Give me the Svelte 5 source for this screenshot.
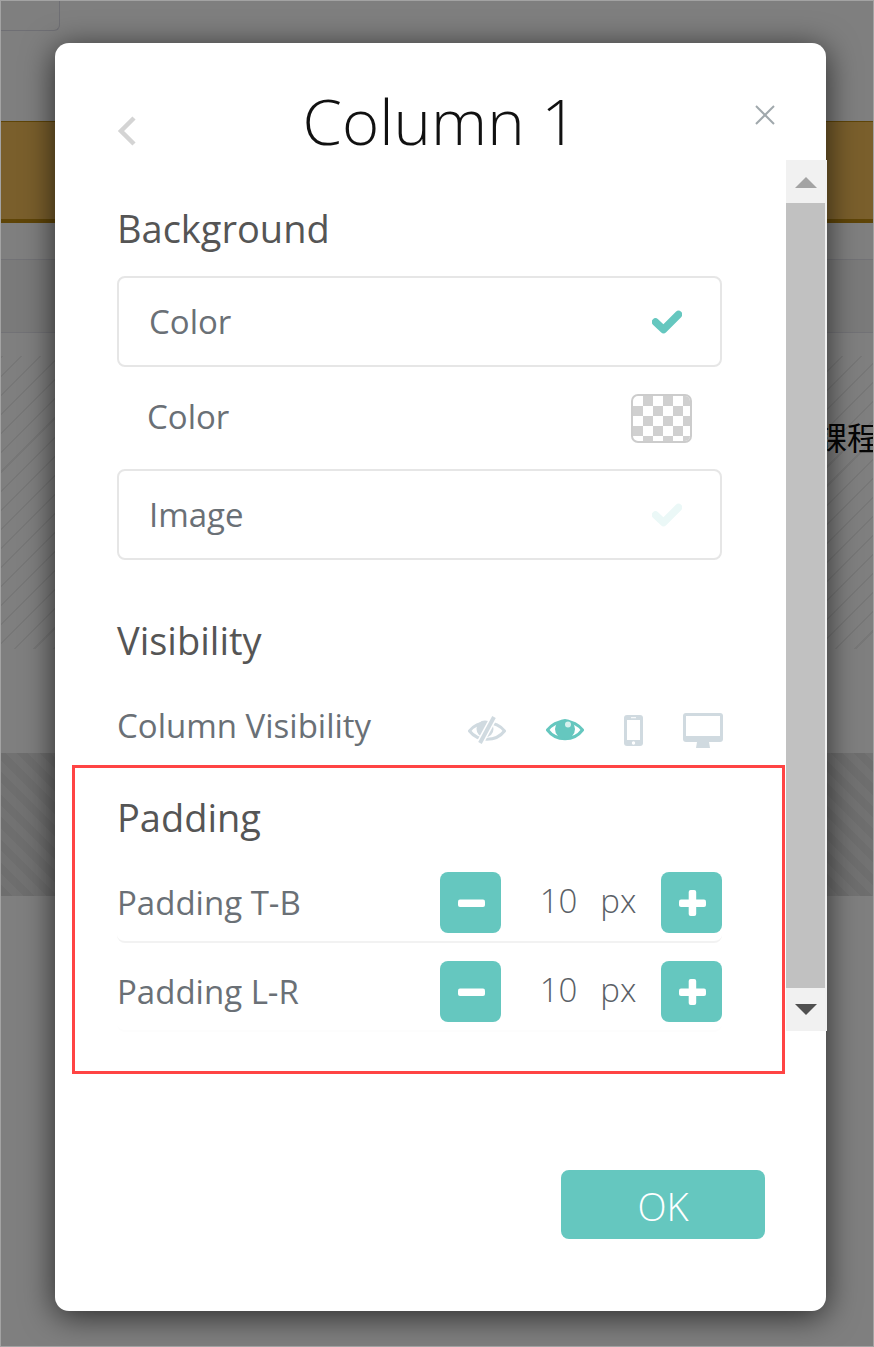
<script>
  const visibility = ['hidden', 'visible', 'mobile', 'desktop'];
  const paddings = [
    { label: 'Padding T-B', value: 10 },
    { label: 'Padding L-R', value: 10 }
  ];
</script>

<div class="page">
  <div class="backdrop">
    <div class="top"><div class="tab"></div></div>
    <div class="band"></div>
    <div class="strip"></div>
    <div class="strip short"></div>
    <div class="hatch"><span>課程</span></div>
    <div class="plain"></div>
    <div class="hatch-dark"></div>
  </div>

  <div class="modal">
    <header>
      <button class="back" aria-label="Back">
        <svg viewBox="0 0 20 30" width="20" height="30" fill="none" stroke="#d4d4d4" stroke-width="4.5">
          <polyline points="17,2 4,15 17,28"></polyline>
        </svg>
      </button>
      <h1>Column 1</h1>
      <button class="close" aria-label="Close">
        <svg viewBox="0 0 20 20" width="20" height="20" stroke="#a0a8ac" stroke-width="2">
          <line x1="1" y1="1" x2="19" y2="19"></line>
          <line x1="19" y1="1" x2="1" y2="19"></line>
        </svg>
      </button>
    </header>

    <div class="body">
      <div class="content">
        <h2>Background</h2>
        <div class="option">
          <span>Color</span>
          <svg class="tick" viewBox="0 0 30 24" width="30" height="24"><path d="M3.5 12 L11.5 19.5 L26.5 4.5" fill="none" stroke="#65c7bf" stroke-width="7.5" stroke-linejoin="round" stroke-linecap="round"></path></svg>
        </div>
        <div class="color-row">
          <span>Color</span>
          <div class="swatch">
            <svg width="57" height="45">
              <defs>
                <pattern id="checker" width="20" height="20" patternUnits="userSpaceOnUse">
                  <rect x="10" width="10" height="10" fill="#d0d0d0"></rect>
                  <rect y="10" width="10" height="10" fill="#d0d0d0"></rect>
                </pattern>
              </defs>
              <rect width="57" height="45" fill="url(#checker)"></rect>
            </svg>
          </div>
        </div>
        <div class="option">
          <span>Image</span>
          <svg class="tick" viewBox="0 0 30 24" width="30" height="24"><path d="M3.5 12 L11.5 19.5 L26.5 4.5" fill="none" stroke="#ebf8f7" stroke-width="7.5" stroke-linejoin="round" stroke-linecap="round"></path></svg>
        </div>

        <h2 class="visibility-title">Visibility</h2>
        <div class="visibility">
          <span>Column Visibility</span>
          <div class="icons">
            {#each visibility as name}
              {#if name === 'hidden'}
                <svg viewBox="0 0 38 30" width="38" height="30">
                  <path d="M1.5 16 C10 5 28 5 36.5 16 C28 27 10 27 1.5 16 Z" fill="none" stroke="#d0dae0" stroke-width="3"></path>
                  <circle cx="17" cy="14" r="8.5" fill="#d0dae0"></circle>
                  <line x1="26" y1="2" x2="12" y2="28" stroke="#fff" stroke-width="7"></line>
                  <line x1="26" y1="2" x2="12" y2="28" stroke="#d0dae0" stroke-width="4"></line>
                </svg>
              {:else if name === 'visible'}
                <svg viewBox="0 0 38 26" width="38" height="26">
                  <path d="M1.5 13 C10 1.5 28 1.5 36.5 13 C28 24.5 10 24.5 1.5 13 Z" fill="none" stroke="#65c7bf" stroke-width="3"></path>
                  <circle cx="19" cy="12" r="10" fill="#65c7bf"></circle>
                  <circle cx="22" cy="7.5" r="3" fill="#d6f1ee"></circle>
                </svg>
              {:else if name === 'mobile'}
                <svg viewBox="0 0 19 31" width="19" height="31">
                  <rect width="19" height="31" rx="3" fill="#d0dae0"></rect>
                  <rect x="3" y="5" width="13" height="20" fill="#fff"></rect>
                  <circle cx="9.5" cy="28" r="1.7" fill="#fff"></circle>
                  <rect x="7" y="2.2" width="5" height="1" fill="#fff"></rect>
                </svg>
              {:else}
                <svg viewBox="0 0 40 35" width="40" height="35">
                  <rect width="40" height="29" rx="3" fill="#d0dae0"></rect>
                  <rect x="3" y="3" width="34" height="20" fill="#fff"></rect>
                  <path d="M14 29 H26 L27 35 H13 Z" fill="#d0dae0"></path>
                </svg>
              {/if}
            {/each}
          </div>
        </div>

        <h2 class="padding-title">Padding</h2>
        {#each paddings as row}
          <div class="stepper">
            <span class="label">{row.label}</span>
            <button class="step" aria-label="Decrease">
              <svg viewBox="0 0 28 28" width="28" height="28"><rect x="1" y="10.5" width="27" height="7.5" rx="2" fill="#fff"></rect></svg>
            </button>
            <div class="value"><span>{row.value}</span><span>px</span></div>
            <button class="step" aria-label="Increase">
              <svg viewBox="0 0 28 28" width="28" height="28">
                <rect x="1" y="10.5" width="27" height="7.5" rx="2" fill="#fff"></rect>
                <rect x="10.7" y="1" width="7.5" height="26" rx="2" fill="#fff"></rect>
              </svg>
            </button>
          </div>
        {/each}
      </div>

      <div class="scrollbar">
        <div class="arrow up"></div>
        <div class="thumb"></div>
        <div class="arrow down"></div>
      </div>
    </div>

    <footer>
      <button class="ok">OK</button>
    </footer>
  </div>

  <div class="annotation"></div>
</div>

<style>
  :global(body) {
    margin: 0;
    font-family: "Open Sans", "Noto Sans CJK TC", sans-serif;
  }

  .page {
    position: relative;
    width: 874px;
    height: 1347px;
    box-sizing: border-box;
    border: 1px solid #a3a3a3;
    overflow: hidden;
    background: #7f7f7f;
  }

  .top {
    height: 120px;
  }

  .tab {
    width: 59px;
    height: 30px;
    box-sizing: border-box;
    border: 1px solid #6f6f74;
    border-top: 0;
    border-left: 0;
    border-bottom-right-radius: 6px;
  }

  .band {
    height: 97px;
    background: #7a5f2c;
    border-top: 1px solid #5f4508;
    border-bottom: 4px solid #5f4508;
  }

  .strip {
    height: 36px;
    border-bottom: 1px solid #727276;
  }

  .strip.short {
    height: 72px;
    background: #7a7a7a;
    border-bottom: 1px solid #727276;
  }

  .hatch {
    height: 293px;
    margin-top: 23px;
    padding-left: 814px;
    box-sizing: border-box;
    white-space: nowrap;
    background: repeating-linear-gradient(-45deg, #7f7f7f 0 12px, #777 12px 13.5px);
  }

  .hatch span {
    display: block;
    padding-top: 60px;
    font-size: 32px;
    line-height: 44px;
    color: #050505;
  }

  .plain {
    height: 104px;
  }

  .hatch-dark {
    height: 143px;
    background: repeating-linear-gradient(45deg, #6e6e6e 0 8px, #727272 8px 16px);
  }

  .modal {
    position: absolute;
    left: 54px;
    top: 42px;
    width: 771px;
    height: 1268px;
    display: flex;
    flex-direction: column;
    background: #fff;
    border-radius: 14px;
    box-shadow: 0 5px 32px rgba(0, 0, 0, 0.68);
  }

  header {
    position: relative;
    height: 117px;
    flex: none;
    display: flex;
    justify-content: center;
    align-items: flex-start;
  }

  h1 {
    margin: 38px 0 0 -1px;
    font-size: 63.5px;
    font-weight: 300;
    line-height: 80px;
    color: #111;
  }

  button {
    padding: 0;
    border: 0;
    background: none;
    font: inherit;
    display: flex;
    align-items: center;
    justify-content: center;
  }

  .back {
    position: absolute;
    left: 62px;
    top: 73px;
  }

  .close {
    position: absolute;
    left: 700px;
    top: 62px;
  }

  .body {
    flex: none;
    height: 871px;
    display: flex;
    margin-right: -1px;
  }

  .content {
    flex: 1;
    padding: 0 64px 0 62px;
  }

  h2 {
    margin: 0;
    font-size: 38px;
    font-weight: 400;
    line-height: 50px;
    color: #555;
  }

  h2:first-child {
    margin-top: 43px;
  }

  .option {
    height: 91px;
    box-sizing: border-box;
    margin-top: 23px;
    padding: 0 38px 0 30px;
    display: flex;
    align-items: center;
    justify-content: space-between;
    border: 2px solid #e6e6e6;
    border-radius: 8px;
    font-size: 33px;
    color: #6a7076;
  }

  .color-row {
    height: 102px;
    box-sizing: border-box;
    margin-bottom: -23px;
    padding: 0 30px 3px 30px;
    display: flex;
    align-items: center;
    justify-content: space-between;
    font-size: 33px;
    color: #6a7076;
  }

  .swatch {
    width: 61px;
    height: 49px;
    margin-top: 4px;
    box-sizing: border-box;
    border: 2px solid #ccc;
    border-radius: 7px;
    overflow: hidden;
  }

  .swatch svg {
    display: block;
  }

  .visibility-title {
    margin-top: 55px;
  }

  .visibility {
    margin-top: 31px;
    height: 58px;
    display: flex;
    align-items: center;
    justify-content: space-between;
    font-size: 33px;
    color: #6a7076;
  }

  .icons {
    display: flex;
    align-items: center;
    gap: 40px;
    margin: 10px -1px 0 0;
  }

  .padding-title {
    margin-top: 38px;
  }

  .stepper {
    height: 69px;
    margin-bottom: 18px;
    display: flex;
    align-items: flex-start;
    border-bottom: 2px solid #f2f2f2;
    border-radius: 8px;
    font-size: 33px;
    color: #6a7076;
  }

  .stepper:last-child {
    border-bottom-color: #fdfdfd;
  }

  .padding-title + .stepper {
    margin-top: 30px;
  }

  .label {
    flex: 1;
    line-height: 62px;
  }

  .step {
    width: 61px;
    height: 61px;
    background: #65c7bf;
    border-radius: 8px;
  }

  .value {
    width: 160px;
    box-sizing: border-box;
    padding-left: 14px;
    display: flex;
    justify-content: center;
    gap: 23px;
    line-height: 58px;
    font-weight: 300;
    color: #5a6066;
  }

  .scrollbar {
    width: 41px;
    flex: none;
    display: flex;
    flex-direction: column;
    background: #f1f1f1;
  }

  .arrow {
    height: 43px;
    flex: none;
    position: relative;
  }

  .arrow::after {
    content: '';
    position: absolute;
    left: 9px;
    border-left: 11px solid transparent;
    border-right: 11px solid transparent;
  }

  .up::after {
    top: 17px;
    border-bottom: 11px solid #a3a3a3;
  }

  .down::after {
    top: 16px;
    border-top: 11px solid #505050;
  }

  .thumb {
    flex: 1;
    margin: 0 2px 0 0;
    background: #c1c1c1;
  }

  footer {
    flex: 1;
    display: flex;
    justify-content: flex-end;
    padding: 139px 61px 0 0;
  }

  .ok {
    width: 204px;
    height: 69px;
    padding-top: 3px;
    background: #65c7bf;
    border-radius: 8px;
    color: #fff;
    font-size: 38px;
    font-weight: 300;
  }

  .annotation {
    position: absolute;
    left: 71px;
    top: 764px;
    width: 707px;
    height: 303px;
    border: 3px solid #ff4444;
    pointer-events: none;
  }
</style>
